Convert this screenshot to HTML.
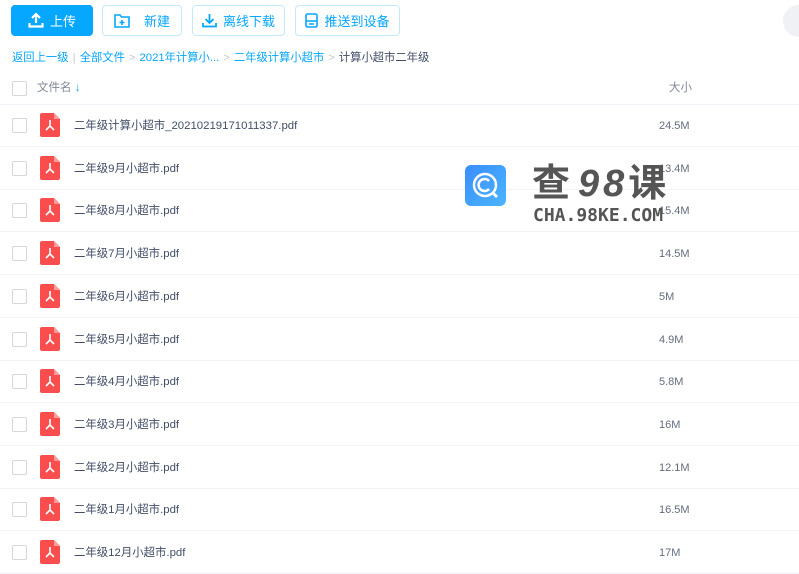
<!DOCTYPE html><html><head><meta charset="utf-8"><style>
body{margin:0;width:799px;height:566px;overflow:hidden;background:#fff;font-family:"Liberation Sans","Noto Sans CJK SC",sans-serif;position:relative;font-size:12px;color:#424e67}
.btn{position:absolute;top:5px;height:31px;border:1px solid #c3eaff;border-radius:4px;box-sizing:border-box;color:#06a7ff;font-size:13px;display:flex;align-items:center;justify-content:center;gap:6px}
.up{background:#06a7ff;color:#fff;border-color:#06a7ff}
.bc{position:absolute;top:49px;left:12px;font-size:11.3px;color:#06a7ff;white-space:nowrap}
.bc span.g{color:#c4c8d0;margin:0 4px}
.bc span.d{color:#424e67}
.cb{position:absolute;left:12px;width:13px;height:13px;border:1px solid #d4d7de;border-radius:2px;background:#fff}
.row{position:absolute;left:0;width:799px;height:42px;border-bottom:1px solid #f1f3f8}
.ico{position:absolute;left:40px;width:20px;height:24px}
.nm{position:absolute;left:74px;font-size:11.4px;color:#424e67}
.sz{position:absolute;left:659px;font-size:11px;color:#636d7e}
</style></head><body>
<div class="btn up" style="left:11px;width:82px"><svg width="16" height="15" viewBox="0 0 16 15"><path d="M8 1v9M4 5l4-4 4 4M1.5 10v3.5h13V10" stroke="#fff" stroke-width="2.2" fill="none"/></svg>上传</div>
<div class="btn" style="left:102px;width:80px;gap:14px"><svg width="16" height="14" viewBox="0 0 16 14"><path d="M1 1h5l1.5 2H15v10H1z" stroke="#06a7ff" stroke-width="1.6" fill="none"/><path d="M8 6v5M5.5 8.5h5" stroke="#06a7ff" stroke-width="1.6"/></svg>新建</div>
<div class="btn" style="left:192px;width:93px"><svg width="15" height="15" viewBox="0 0 15 15"><path d="M7.5 1v9M3.5 6l4 4 4-4M1 10v3.5h13V10" stroke="#06a7ff" stroke-width="1.8" fill="none"/></svg>离线下载</div>
<div class="btn" style="left:295px;width:105px"><svg width="13" height="15" viewBox="0 0 13 15"><rect x="1" y="1" width="11" height="13" rx="1.5" stroke="#06a7ff" stroke-width="1.6" fill="none"/><path d="M1 8h11M4 11h5" stroke="#06a7ff" stroke-width="1.6"/></svg>推送到设备</div>
<div style="position:absolute;left:783px;top:5px;width:32px;height:32px;border-radius:16px;background:#f0f1f4"></div>
<div class="bc">返回上一级 <span class="g" style="margin:0 1px">|</span> 全部文件<span class="g">&gt;</span>2021年计算小...<span class="g">&gt;</span>二年级计算小超市<span class="g">&gt;</span><span class="d">计算小超市二年级</span></div>
<div class="row" style="top:70px;height:34px;border-bottom:1px solid #f1f2fa">
<div class="cb" style="top:11px"></div>
<div style="position:absolute;left:37px;top:9px;color:#818999;font-size:11.5px">文件名 <span style="color:#06a7ff">↓</span></div>
<div style="position:absolute;left:669px;top:9px;color:#818999;font-size:11.5px">大小</div></div>
<div id="rows"></div>
<script>
var d=[["二年级计算小超市_20210219171011337.pdf","24.5M"],["二年级9月小超市.pdf","13.4M"],["二年级8月小超市.pdf","15.4M"],["二年级7月小超市.pdf","14.5M"],["二年级6月小超市.pdf","5M"],["二年级5月小超市.pdf","4.9M"],["二年级4月小超市.pdf","5.8M"],["二年级3月小超市.pdf","16M"],["二年级2月小超市.pdf","12.1M"],["二年级1月小超市.pdf","16.5M"],["二年级12月小超市.pdf","17M"]];
var h="";d.forEach(function(r,i){var t=104+i*42.7;h+='<div class="row" style="top:'+t+'px"><div class="cb" style="top:14px"></div><svg class="ico" style="top:9px" viewBox="0 0 20 24"><path d="M0 2a2 2 0 0 1 2-2h12l6 6v16a2 2 0 0 1-2 2H2a2 2 0 0 1-2-2z" fill="#fa4e4e"/><path d="M14 0v6h6z" fill="#fc9a9a"/><path d="M10 7v6M10 13l-4 4M10 13l4 4" stroke="#fff" stroke-width="1.6" fill="none"/></svg><div class="nm" style="top:13px">'+r[0]+'</div><div class="sz" style="top:16px">'+r[1]+'</div></div>';});
document.getElementById("rows").innerHTML=h;
</script>
<div style="position:absolute;left:465px;top:165px;width:41px;height:41px;border-radius:6px;background:linear-gradient(135deg,#3a8dff,#4bb5ff)"><svg width="41" height="41" viewBox="0 0 41 41"><circle cx="20" cy="20" r="11" stroke="#fff" stroke-width="2.5" fill="none"/><path d="M24 16a6 6 0 1 0 0 8" stroke="#fff" stroke-width="2.5" fill="none"/><path d="M27 27l5 5" stroke="#fff" stroke-width="3"/></svg></div>
<div style="position:absolute;left:532px;top:158px;font-size:38px;font-weight:bold;color:#555;letter-spacing:8px;font-family:'Noto Sans CJK SC',sans-serif;line-height:44px">查<span style="font-family:'Liberation Sans';font-style:italic;letter-spacing:4px">98</span>课</div>
<div style="position:absolute;left:533px;top:205px;font-size:18px;font-weight:bold;color:#555;font-family:'DejaVu Sans Mono',monospace">CHA.98KE.COM</div>
</body></html>
